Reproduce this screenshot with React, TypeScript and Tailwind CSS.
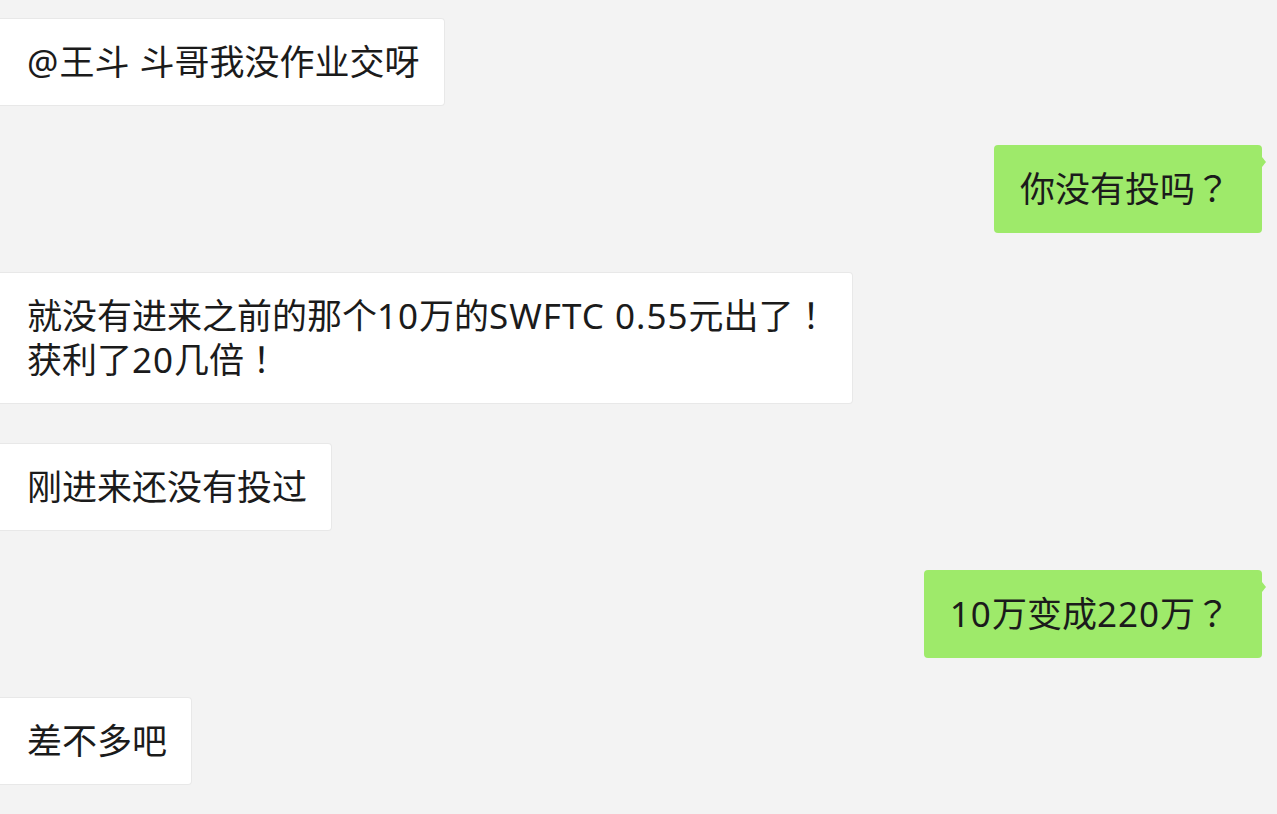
import React from "react";

type Msg = { side: "l" | "r"; lines: string[] };

const msgs: Msg[] = [
  { side: "l", lines: ["@王斗 斗哥我没作业交呀"] },
  { side: "r", lines: ["你没有投吗？"] },
  { side: "l", lines: ["就没有进来之前的那个10万的SWFTC 0.55元出了！", "获利了20几倍！"] },
  { side: "l", lines: ["刚进来还没有投过"] },
  { side: "r", lines: ["10万变成220万？"] },
  { side: "l", lines: ["差不多吧"] },
];

function Line({ text }: { text: string }) {
  const parts = text.split(/([！？]|[\x20-\x7e]+)/).filter((p) => p !== "");
  return (
    <div className="h-[44px]">
      {parts.map((p, k) =>
        p === "！" || p === "？" ? (
          <span
            key={k}
            className="inline-block align-top h-[40px] leading-[40px]"
            style={{ fontFamily: '"Noto Sans CJK TC", sans-serif' }}
          >
            {p}
          </span>
        ) : /^[\x20-\x7e]+$/.test(p) ? (
          <span key={k} className="tracking-[1px]">
            {p}
          </span>
        ) : (
          <span key={k}>{p}</span>
        )
      )}
    </div>
  );
}

export default function App() {
  return (
    <div
      className="w-[1277px] h-[814px] overflow-hidden bg-[#f3f3f3] pt-[18px] flex flex-col gap-[39px] [text-spacing-trim:space-all]"
      style={{ fontFamily: '"Noto Sans", "Noto Sans CJK SC", sans-serif' }}
    >
      {msgs.map((m, i) =>
        m.side === "l" ? (
          <div key={i} className="flex justify-start">
            <div className="bg-white border border-[#e8e8e8] border-l-0 rounded-r-[4px] pl-[27px] pr-[24px] pt-[21px] pb-[21px] text-[35px] leading-[44px] text-[#1b1b1b] whitespace-nowrap">
              {m.lines.map((l, j) => (
                <Line key={j} text={l} />
              ))}
            </div>
          </div>
        ) : (
          <div key={i} className="flex justify-end pr-[15px]">
            <div className="relative bg-[#9eea6a] rounded-[4px] pl-[26px] pr-[32px] py-[22px] text-[35px] leading-[44px] text-[#1b1b1b] whitespace-nowrap">
              {m.lines.map((l, j) => (
                <Line key={j} text={l} />
              ))}
              <div className="absolute right-[-4px] top-[12px] w-0 h-0 border-y-[5px] border-y-transparent border-l-[4px] border-l-[#9eea6a]" />
            </div>
          </div>
        )
      )}
    </div>
  );
}
